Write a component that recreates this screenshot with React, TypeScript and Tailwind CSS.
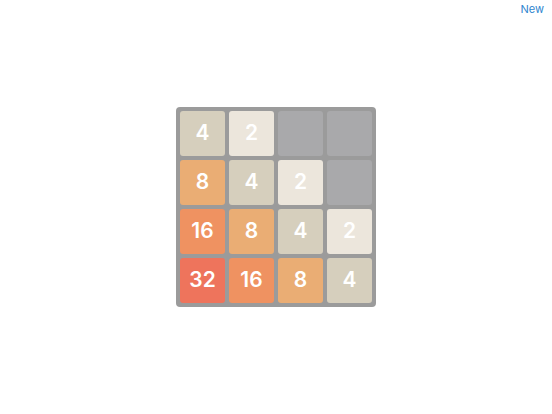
const board: number[][] = [
  [4, 2, 0, 0],
  [8, 4, 2, 0],
  [16, 8, 4, 2],
  [32, 16, 8, 4],
];

const tileStyles: Record<number, string> = {
  0: "bg-[#a9a9ab]",
  2: "bg-[#ece6dc]",
  4: "bg-[#d6cfbd]",
  8: "bg-[#eaad74]",
  16: "bg-[#ef9261]",
  32: "bg-[#ee745c]",
};

const Tile = ({ value }: { value: number }) => (
  <div
    className={`w-[45px] h-[45px] rounded-[3px] flex items-center justify-center text-white font-semibold text-[21px] ${tileStyles[value]}`}
  >
    {value > 0 ? value : ""}
  </div>
);

export default function App() {
  return (
    <div className="relative w-[552px] h-[414px] bg-white font-['Inter',sans-serif] flex items-center justify-center">
      <button className="absolute top-[1px] right-[8px] text-[11px] text-[#2f86cf]">New</button>
      <div className="bg-[#9b9b9b] rounded-[4px] p-[4px] mb-[1px]">
        <div className="grid grid-cols-4 gap-[4px]">
          {board.map((row, r) =>
            row.map((v, c) => <Tile key={`${r}-${c}`} value={v} />)
          )}
        </div>
      </div>
    </div>
  );
}
